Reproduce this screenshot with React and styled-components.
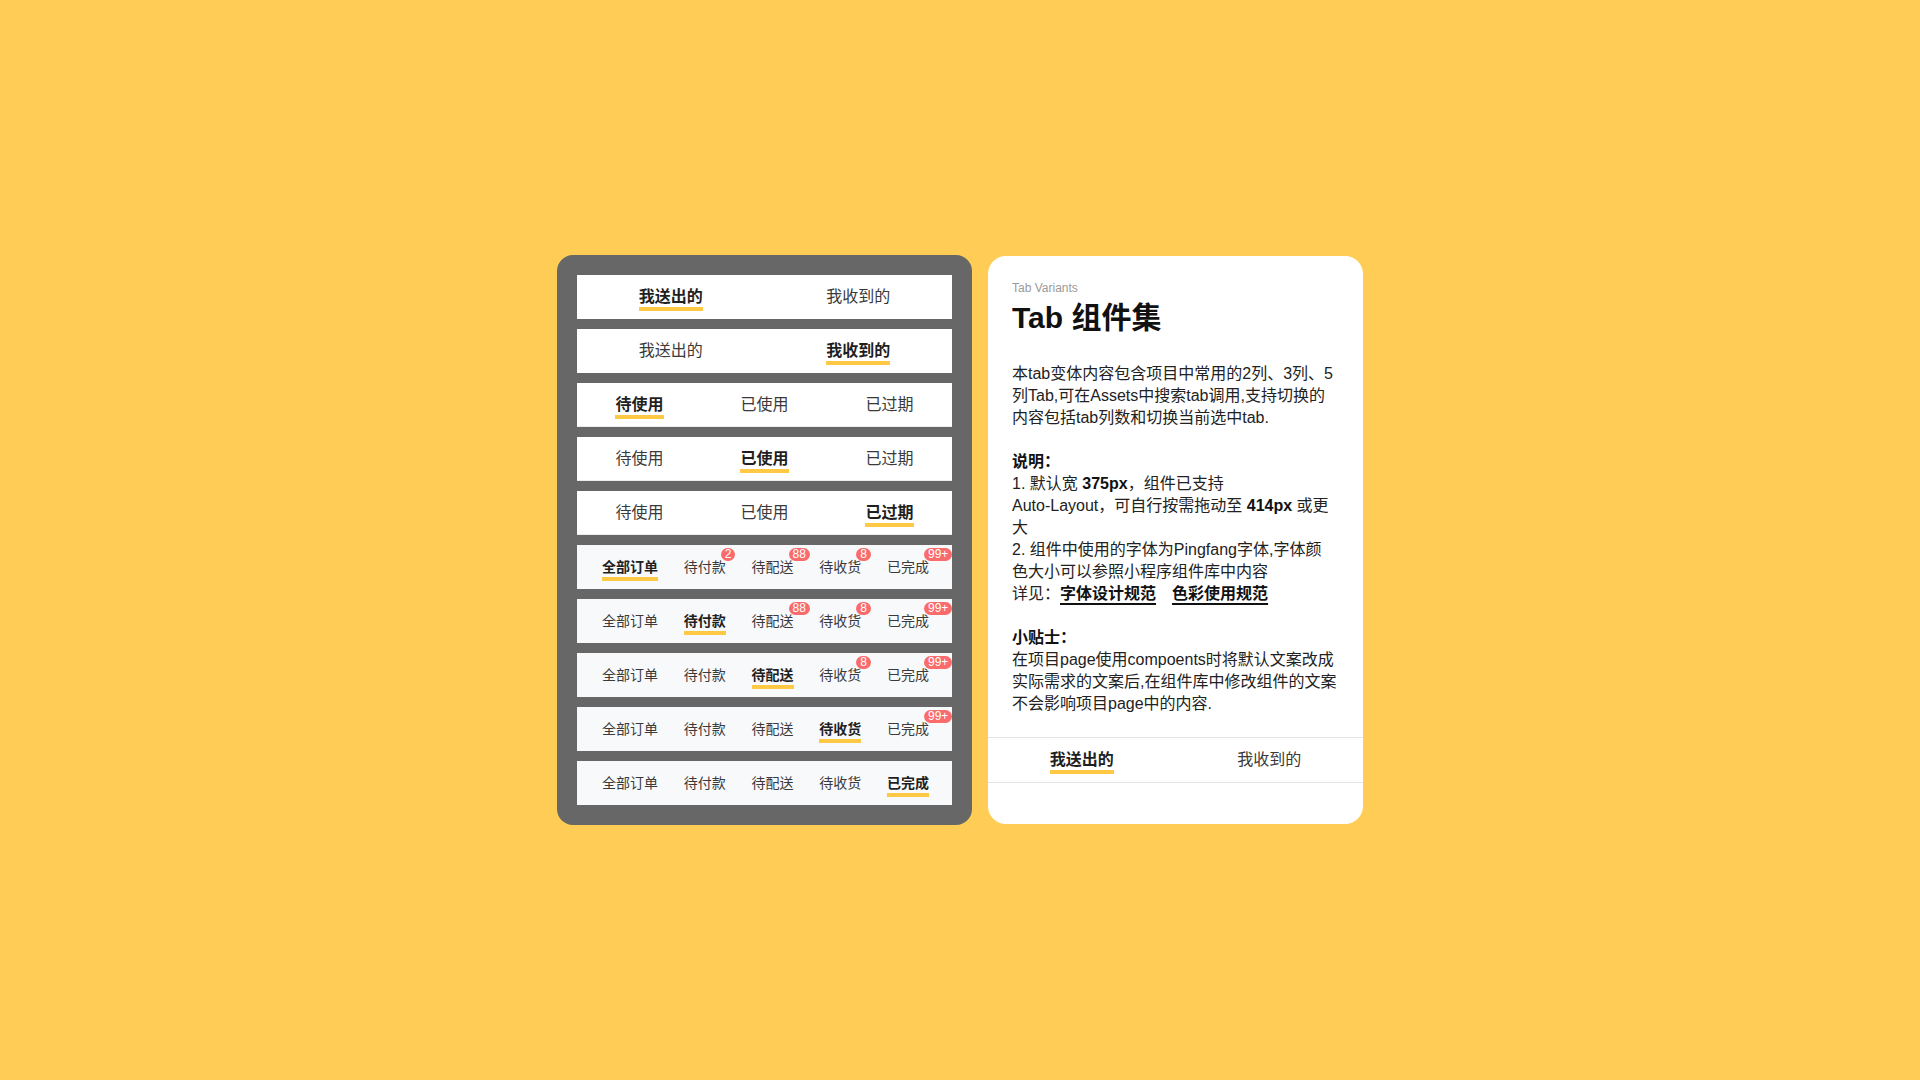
import React from 'react'
import styled, { createGlobalStyle, css } from 'styled-components'

const GlobalStyle = createGlobalStyle`
	* {
		box-sizing: border-box;
	}
	body {
		margin: 0;
		background: #ffcd55;
		font-family: 'Liberation Sans', 'Noto Sans CJK SC', sans-serif;
		color: #333;
	}
`

const twoTabs = ['我送出的', '我收到的']
const threeTabs = ['待使用', '已使用', '已过期']
const orderTabs = [
	{ label: '全部订单' },
	{ label: '待付款', badge: '2' },
	{ label: '待配送', badge: '88' },
	{ label: '待收货', badge: '8' },
	{ label: '已完成', badge: '99+' },
]

const SimpleTabs = ({ items, active, divider, flush }) => (
	<TabRow $divider={divider} $flush={flush}>
		{items.map((label, i) => (
			<TabCell key={label}>
				<Label $active={i === active}>{label}</Label>
			</TabCell>
		))}
	</TabRow>
)

// badges only show on the tabs after the selected one
const OrderTabs = ({ active }) => (
	<TabRow $dense>
		{orderTabs.map((tab, i) => (
			<Label key={tab.label} $small $active={i === active}>
				{tab.label}
				{tab.badge && i > active && <Badge>{tab.badge}</Badge>}
			</Label>
		))}
	</TabRow>
)

const App = () => {
	return (
		<>
			<GlobalStyle />
			<Page>
				<Board>
					<SimpleTabs items={twoTabs} active={0} />
					<SimpleTabs items={twoTabs} active={1} />
					<SimpleTabs items={threeTabs} active={0} divider />
					<SimpleTabs items={threeTabs} active={1} divider />
					<SimpleTabs items={threeTabs} active={2} divider />
					{orderTabs.map((tab, i) => (
						<OrderTabs key={tab.label} active={i} />
					))}
				</Board>
				<Card>
					<Content>
						<Eyebrow>Tab Variants</Eyebrow>
						<Title>Tab 组件集</Title>
						<Text>
							本tab变体内容包含项目中常用的2列、3列、5
							<br />
							列Tab,可在Assets中搜索tab调用,支持切换的
							<br />
							内容包括tab列数和切换当前选中tab.
						</Text>
						<Text>
							<strong>说明：</strong>
							<br />
							1. 默认宽 <strong>375px</strong>，组件已支持
							<br />
							Auto-Layout，可自行按需拖动至 <strong>414px</strong> 或更
							<br />
							大
							<br />
							2. 组件中使用的字体为Pingfang字体,字体颜
							<br />
							色大小可以参照小程序组件库中内容
							<br />
							详见：<Link>字体设计规范</Link>
							<Link>色彩使用规范</Link>
						</Text>
						<Text>
							<strong>小贴士：</strong>
							<br />
							在项目page使用compoents时将默认文案改成
							<br />
							实际需求的文案后,在组件库中修改组件的文案
							<br />
							不会影响项目page中的内容.
						</Text>
					</Content>
					<SimpleTabs items={twoTabs} active={0} flush />
				</Card>
			</Page>
		</>
	)
}

const Page = styled.div`
	min-height: 100vh;
	display: flex;
	align-items: center;
	justify-content: center;
	gap: 16px;
`

const Board = styled.div`
	width: 415px;
	padding: 20px;
	background: #676767;
	border-radius: 16px;
	display: flex;
	flex-direction: column;
	gap: 10px;
`

const TabRow = styled.div`
	height: 44px;
	display: flex;
	align-items: center;
	background: #fff;
	overflow: hidden;
	${(p) =>
		p.$divider &&
		css`
			border-bottom: 1px solid #ececec;
		`}
	${(p) =>
		p.$dense &&
		css`
			background: #f8f9fb;
			justify-content: space-between;
			padding: 0 23px 0 25px;
		`}
	${(p) =>
		p.$flush &&
		css`
			height: 46px;
			border-top: 1px solid #e4e4e4;
			border-bottom: 1px solid #e4e4e4;
		`}
`

const TabCell = styled.div`
	flex: 1;
	display: flex;
	justify-content: center;
`

const Label = styled.span`
	position: relative;
	font-family: 'Noto Sans CJK SC', sans-serif;
	font-size: ${(p) => (p.$small ? '14px' : '16px')};
	line-height: ${(p) => (p.$small ? '20px' : '22px')};
	margin-bottom: ${(p) => (p.$small ? '2px' : '4px')};
	color: ${(p) => (p.$active ? '#1f1f1f' : '#3a3a3a')};
	font-weight: ${(p) => (p.$active ? 700 : 400)};
	white-space: nowrap;
	${(p) =>
		p.$active &&
		css`
			&::after {
				content: '';
				position: absolute;
				left: 0;
				right: 0;
				bottom: -5px;
				height: 4px;
				background: #ffc845;
			}
		`}
`

const Badge = styled.span`
	position: absolute;
	left: calc(100% - 5px);
	top: -8px;
	min-width: 14px;
	height: 13px;
	padding: 0 4px;
	border-radius: 7px;
	background: #fa6b6b;
	color: #fff;
	font-family: 'Liberation Sans', sans-serif;
	font-size: 12px;
	font-weight: 400;
	line-height: 13px;
	text-align: center;
`

const Card = styled.div`
	width: 375px;
	background: #fff;
	border-radius: 18px;
	display: flex;
	flex-direction: column;
	padding-bottom: 41px;
`

const Content = styled.div`
	flex: 1;
	padding: 24px 24px 0;
`

const Eyebrow = styled.div`
	font-size: 12px;
	line-height: 16px;
	color: #9a9a9a;
`

const Title = styled.h1`
	margin: 2px 0 25px;
	font-size: 30px;
	line-height: 40px;
	font-weight: 600;
	color: #111;
`

const Text = styled.p`
	margin: 0 0 22px;
	font-size: 16px;
	line-height: 22px;
	color: #222;
	white-space: nowrap;
	strong {
		font-weight: 700;
		color: #111;
	}
`

const Link = styled.span`
	font-weight: 700;
	color: #111;
	text-decoration: underline;
	text-decoration-thickness: 1.5px;
	text-underline-offset: 4px;
	& + & {
		margin-left: 16px;
	}
`

export default App
